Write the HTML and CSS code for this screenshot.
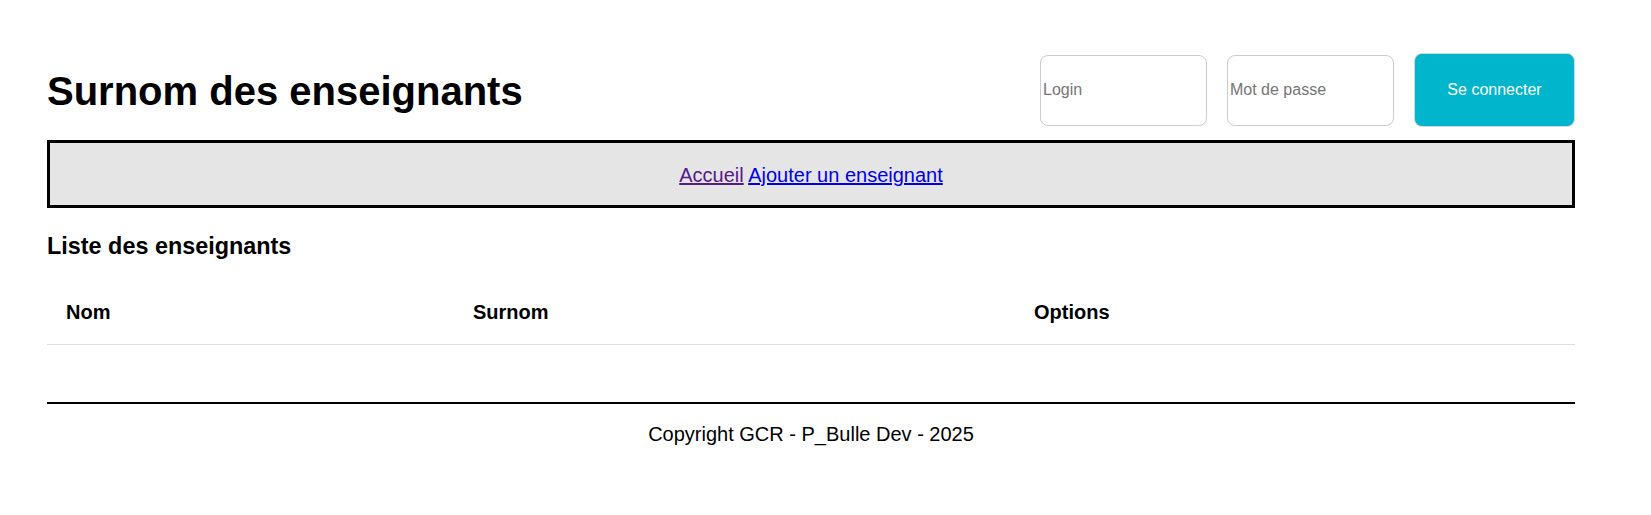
FILE: index.html
```html
<!DOCTYPE html>
<html lang="fr">
<head>
<meta charset="utf-8">
<title>Surnom des enseignants</title>
<link rel="stylesheet" href="styles.css">
</head>
<body>
<div class="page">
  <header class="header">
    <h1 class="title">Surnom des enseignants</h1>
    <form class="login">
      <input class="field" type="text" placeholder="Login">
      <input class="field" type="password" placeholder="Mot de passe">
      <button class="btn" type="button">Se connecter</button>
    </form>
  </header>
  <nav class="nav">
    <a class="link visited" href="#">Accueil</a> <a class="link" href="#">Ajouter un enseignant</a>
  </nav>
  <h3 class="subtitle">Liste des enseignants</h3>
  <table class="table">
    <thead>
      <tr>
        <th class="col-nom">Nom</th>
        <th class="col-surnom">Surnom</th>
        <th class="col-options">Options</th>
      </tr>
    </thead>
    <tbody></tbody>
  </table>
  <footer class="footer">Copyright GCR - P_Bulle Dev - 2025</footer>
</div>
</body>
</html>
```

FILE: styles.css
```css
html, body {
  margin: 0;
  padding: 0;
  background: #fff;
}
body {
  font-family: "Liberation Sans", Arial, sans-serif;
  font-size: 20px;
  color: #000;
}
.page {
  padding: 53px 76px 0 47px;
}
.header {
  display: flex;
  justify-content: space-between;
  align-items: center;
  height: 74px;
}
.title {
  margin: 0;
  font-size: 40px;
  font-weight: bold;
  line-height: 46px;
  padding-top: 1px;
}
.login {
  display: flex;
  align-items: center;
  gap: 20px;
  margin: 0;
}
.field {
  box-sizing: border-box;
  width: 167px;
  height: 71px;
  border: 1px solid #cccccc;
  border-radius: 8px;
  padding: 0 2px;
  font-family: "Liberation Sans", Arial, sans-serif;
  font-size: 16px;
  color: #000;
  background: #fff;
  outline: none;
}
.field::placeholder {
  color: #757575;
}
.btn {
  box-sizing: border-box;
  width: 161px;
  height: 74px;
  border: 1px solid #d6d6d6;
  border-radius: 8px;
  background: #00b5cc;
  color: #fff;
  font-family: "Liberation Sans", Arial, sans-serif;
  font-size: 16px;
  cursor: pointer;
}
.nav {
  margin-top: 13px;
  border: 3px solid #000;
  background: #e5e5e5;
  padding: 21px 19px 18px;
  text-align: center;
  line-height: 23px;
}
.link {
  color: #0000ee;
  text-decoration: underline;
}
.link.visited {
  color: #551a8b;
}
.subtitle {
  margin: 25px 0 21px;
  font-size: 23.4px;
  font-weight: bold;
  line-height: 27px;
}
.table {
  width: 100%;
  border-collapse: collapse;
}
.table th {
  text-align: left;
  font-weight: bold;
  padding: 20px 19px;
  line-height: 23px;
  border-bottom: 1px solid #dddddd;
}
.col-nom {
  width: 369px;
}
.col-surnom {
  width: 523px;
}
.footer {
  margin-top: 57px;
  border-top: 2px solid #000;
  padding-top: 19px;
  text-align: center;
  line-height: 23px;
}
```
